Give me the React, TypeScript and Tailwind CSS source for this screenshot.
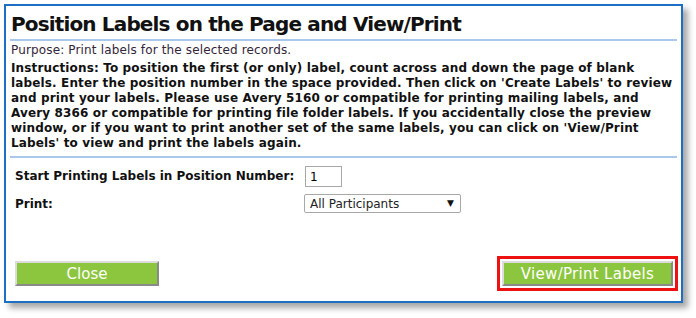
import React from "react";

export default function App() {
  const font = { fontFamily: '"DejaVu Sans", Verdana, sans-serif' };
  return (
    <div className="w-[696px] h-[318px] bg-white relative" style={font}>
      <div className="absolute left-[4px] top-[4px] w-[679px] h-[299px] border-2 border-[#1c6fc2] bg-white shadow-[5px_5px_6px_rgba(0,0,0,0.35)] flex flex-col">
        <div className="px-[4px]">
          <h1 className="text-[20px] leading-[26px] font-bold text-[#111] mt-[5px] ml-[1px] tracking-[-0.85px]">
            Position Labels on the Page and View/Print
          </h1>
          <div className="h-[2px] bg-[#a9c8ea] mt-[2px]" />
          <p className="text-[12px] leading-[14px] text-[#33263a] mt-[2px] ml-[1px] tracking-[0.15px]">
            Purpose: Print labels for the selected records.
          </p>
          <p className="text-[12px] leading-[15px] font-bold text-[#111] mt-[4px] ml-[1px] whitespace-nowrap tracking-[0.14px]">
            Instructions: To position the first (or only) label, count across and down the page of blank
            <br />
            labels. Enter the position number in the space provided. Then click on 'Create Labels' to review
            <br />
            and print your labels. Please use Avery 5160 or compatible for printing mailing labels, and
            <br />
            Avery 8366 or compatible for printing file folder labels. If you accidentally close the preview
            <br />
            window, or if you want to print another set of the same labels, you can click on 'View/Print
            <br />
            Labels' to view and print the labels again.
          </p>
          <div className="h-[2px] bg-[#a9c8ea] mt-[5px]" />
          <div className="flex items-center mt-[7px] ml-[5px] h-[22px]">
            <span className="text-[12px] font-bold text-[#111] w-[290px]">Start Printing Labels in Position Number:</span>
            <div className="w-[37px] h-[21px] border border-[#a8a8a8] text-[12px] text-black pl-[4px] pt-[3px] leading-[14px]">1</div>
          </div>
          <div className="flex items-start mt-[7px] ml-[5px]">
            <span className="text-[12px] font-bold text-[#111] w-[289px] mt-[1px]">Print:</span>
            <div className="w-[157px] h-[19px] border border-[#a8a8a8] rounded-[2px] text-[12px] text-[#222] pl-[5px] flex items-center justify-between pr-[6px]">
              <span>All Participants</span>
              <span className="text-[9px] text-[#111]">▼</span>
            </div>
          </div>
        </div>
        <div className="flex justify-between items-center mt-auto mb-[10px] pl-[9px] pr-[3px]">
          <button className="w-[144px] h-[25px] bg-[#8cc63e] border-2 border-t-[#dcdcdc] border-l-[#dcdcdc] border-r-[#8a8a8a] border-b-[#8a8a8a] text-white text-[15px] leading-[20px]">
            Close
          </button>
          <div className="border-[3px] border-[#ee1111] p-[2px]">
            <button className="w-[171px] h-[25px] bg-[#8cc63e] border-2 border-t-[#dcdcdc] border-l-[#dcdcdc] border-r-[#8a8a8a] border-b-[#8a8a8a] text-white text-[15px] leading-[20px] tracking-[0.3px] block">
              View/Print Labels
            </button>
          </div>
        </div>
      </div>
    </div>
  );
}
